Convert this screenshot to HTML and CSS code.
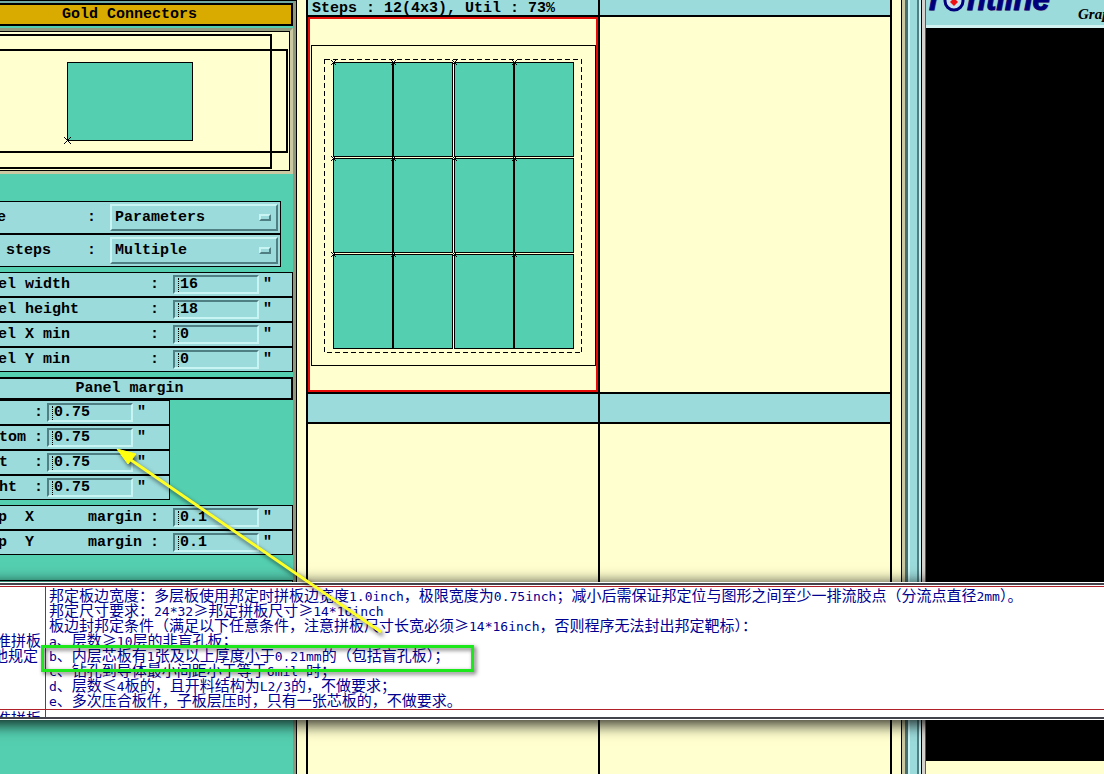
FILE: index.html
```html
<!DOCTYPE html>
<html lang="zh-CN">
<head>
<meta charset="utf-8">
<title>Panel Wizard</title>
<link rel="stylesheet" href="styles.css">
</head>
<body>
<div class="app">
  <aside class="settings">
    <div class="settings-inner">
      <h2 class="title gold">Gold Connectors</h2>
      <div class="preview">
        <svg viewBox="0 0 289 138" shape-rendering="crispEdges" aria-label="Panel preview">
          <g fill="none" stroke="#000" stroke-width="2">
            <path d="M-2 3H271V136H-2"/>
            <path d="M-2 18H287V120H-2"/>
          </g>
          <rect x="67.5" y="30.5" width="125" height="78" fill="#54cfb0" stroke="#000"/>
          <path d="M64 105l7 7M71 105l-7 7" stroke="#000"/>
        </svg>
      </div>

      <div class="group choices">
        <div class="row">
          <label class="name" for="type">e</label><span class="colon">:</span>
          <span class="picker"><select id="type"><option>Parameters</option></select></span>
        </div>
        <div class="row">
          <label class="name" for="steps"> steps</label><span class="colon">:</span>
          <span class="picker"><select id="steps"><option>Multiple</option></select></span>
        </div>
      </div>

      <div class="group">
        <div class="row"><label class="name" for="pw">el width</label><span class="colon">:</span><span class="field"><input id="pw" type="text" value="16"></span><span class="unit">"</span></div>
        <div class="row"><label class="name" for="ph">el height</label><span class="colon">:</span><span class="field"><input id="ph" type="text" value="18"></span><span class="unit">"</span></div>
        <div class="row"><label class="name" for="px">el X min</label><span class="colon">:</span><span class="field"><input id="px" type="text" value="0"></span><span class="unit">"</span></div>
        <div class="row"><label class="name" for="py">el Y min</label><span class="colon">:</span><span class="field"><input id="py" type="text" value="0"></span><span class="unit">"</span></div>
      </div>

      <h2 class="title margin-title">Panel margin</h2>
      <div class="group margins">
        <div class="row"><label class="name" for="mt" aria-label="Top"></label><span class="colon">:</span><span class="field"><input id="mt" type="text" value="0.75"></span><span class="unit">"</span></div>
        <div class="row"><label class="name" for="mb">tom</label><span class="colon">:</span><span class="field"><input id="mb" type="text" value="0.75"></span><span class="unit">"</span></div>
        <div class="row"><label class="name" for="ml">t</label><span class="colon">:</span><span class="field"><input id="ml" type="text" value="0.75"></span><span class="unit">"</span></div>
        <div class="row"><label class="name" for="mr">ht</label><span class="colon">:</span><span class="field"><input id="mr" type="text" value="0.75"></span><span class="unit">"</span></div>
      </div>

      <div class="group step-margins">
        <div class="row"><label class="name" for="sx">p  X      margin</label><span class="colon">:</span><span class="field"><input id="sx" type="text" value="0.1"></span><span class="unit">"</span></div>
        <div class="row"><label class="name" for="sy">p  Y      margin</label><span class="colon">:</span><span class="field"><input id="sy" type="text" value="0.1"></span><span class="unit">"</span></div>
      </div>
      <div class="more"></div>
    </div>
  </aside>

  <main class="results">
    <div class="sheet">
      <div class="caption">Steps : 12(4x3), Util : 73%</div>
      <div class="caption"></div>
      <div class="cell selected">
        <svg class="layout" viewBox="310 19 286 371" shape-rendering="crispEdges" aria-label="Panel layout, 4 by 3 steps">
          <defs>
            <g id="step">
              <rect x=".5" y=".5" width="59" height="94" fill="#54cfb0" stroke="#000"/>
            </g>
            <g id="step-row">
              <use href="#step" x="333"/>
              <use href="#step" x="393"/>
              <use href="#step" x="454"/>
              <use href="#step" x="514"/>
              <path d="M331 -2l5 5M336 -2l-5 5M391 -2l5 5M396 -2l-5 5M452 -2l5 5M457 -2l-5 5M512 -2l5 5M517 -2l-5 5" stroke="#000"/>
            </g>
          </defs>
          <rect x="311.5" y="45.5" width="284" height="320" fill="none" stroke="#000"/>
          <rect x="324.5" y="59.5" width="257" height="293" fill="none" stroke="#000" stroke-dasharray="5 3"/>
          <use href="#step-row" y="62"/>
          <use href="#step-row" y="158"/>
          <use href="#step-row" y="254"/>
        </svg>
      </div>
      <div class="cell"></div>
      <div class="caption"></div>
      <div class="caption"></div>
      <div class="cell"></div>
      <div class="cell"></div>
    </div>
  </main>

  <div class="splitter"></div>

  <section class="viewer">
    <header class="brand">
      <svg class="logo" viewBox="0 0 126 25" width="126" height="25" aria-label="Frontline">
        <g font-family="Liberation Sans, Arial, sans-serif" font-weight="700" font-style="italic" font-size="31">
          <g fill="#99a0a0"><text x="4" y="11">r</text><text x="42" y="11">ntline</text></g>
          <g fill="#00007c" stroke="#00007c"><text x="3" y="10">r</text><text x="41" y="10">ntline</text></g>
        </g>
        <circle cx="28" cy="1" r="9" fill="#c9e4ee" stroke="#00007c" stroke-width="3"/>
        <path d="M28 -2l4 4-4 4-4-4z" fill="#f01010"/>
      </svg>
      <span class="product">Graphics</span>
    </header>
    <div class="screen"></div>
    <div class="console"></div>
  </section>
</div>

<article class="note">
  <div class="note-side"><p>准拼板</p><p class="indent">他规定</p></div>
  <div class="note-text">
    <p>邦定板边宽度：多层板使用邦定时拼板边宽度<span>1.0inch</span>，极限宽度为<span>0.75inch</span>；减小后需保证邦定位与图形之间至少一排流胶点（分流点直径<span>2mm</span>）。</p>
    <p>邦定尺寸要求：<span>24*32</span>≥邦定拼板尺寸≥<span>14*16inch</span></p>
    <p>板边封邦定条件（满足以下任意条件，注意拼板尺寸长宽必须≥<span>14*16inch</span>，否则程序无法封出邦定靶标）：</p>
    <p><span>a</span>、层数≥<span>10</span>层的非盲孔板；</p>
    <p><span>b</span>、内层芯板有<span>1</span>张及以上厚度小于<span>0.21mm</span>的（包括盲孔板）；</p>
    <p><span>c</span>、钻孔到导体最小间距小于等于<span>6mil </span>时；</p>
    <p><span>d</span>、层数≤<span>4</span>板的，且开料结构为<span>L2/3</span>的，不做要求；</p>
    <p><span>e</span>、多次压合板件，子板层压时，只有一张芯板的，不做要求。</p>
  </div>
  <div class="note-side next"><p>准拼板</p></div>
  <div class="note-text next"></div>
</article>
<div class="highlight"></div>
<svg class="arrow" viewBox="0 0 290 210" width="290" height="210" aria-hidden="true">
  <path d="M281 192L28 18" fill="none" stroke="#ffff28" stroke-width="3"/>
  <path d="M17 9L36 14L28 24Z" fill="#ffff10" stroke="#ffff10"/>
</svg>
</body>
</html>
```

FILE: styles.css
```css
:root {
  --teal: #54cfb0;
  --blue: #9cdbdb;
  --cream: #ffffcf;
  --light: #c9f4f4;
  --dark: #507f83;
}

*, *::before, *::after { box-sizing: border-box; }

body {
  margin: 0;
  position: relative;
  overflow: hidden;
  background: var(--cream);
  color: #000;
  font: bold 15px/19px "Liberation Mono", "Courier New", monospace;
}

h2, p { margin: 0; font: inherit; }

.app {
  display: grid;
  grid-template-columns: 297px minmax(0, 1fr) 25px 178px;
  min-height: 100vh;
}

/* Settings column */
.settings {
  overflow: hidden;
  background: var(--teal);
  border-right: 1px solid #000;
  border-top: 1px solid #000;
  box-shadow: inset -3px 0 #91997c, inset 0 2px #71a9a5;
}
.settings-inner {
  margin-left: -4px;
  padding: 2px 3px 0 0;
}
.title {
  height: 23px;
  border: 2px solid #000;
  text-align: center;
}
.gold { background: #d9ab00; padding-right: 30px; }
.margin-title {
  margin-top: 5px;
  background: var(--blue);
  padding-right: 30px;
}
.preview {
  margin-top: 2px;
  padding-left: 4px;
  background: var(--cream);
  border: 3px solid #cbc9a2;
  border-top-color: #91997c;
  border-left: 0;
}
.preview svg {
  display: block;
  border: solid #000;
  border-width: 1px 1px 1px 0;
  box-sizing: content-box;
  width: 289px;
  height: 138px;
}

.row {
  display: flex;
  align-items: center;
  height: 25px;
  padding: 0 20px 0 1px;
  border: 1px solid #000;
  background: var(--blue);
}
.name { flex: 1; white-space: pre; }
.colon { margin-right: 14px; }
.choices { margin: 27px 12px 5px 0; }
.choices .row { height: 33px; padding: 0 2px 0 0; }
.margins { width: 174px; margin-bottom: 5px; }
.margins .row { padding-right: 23px; padding-left: 2px; }
.margins .colon { margin-right: 4px; }

.picker { position: relative; width: 168px; }
.picker::after {
  content: "";
  position: absolute;
  right: 7px;
  top: 10px;
  width: 12px;
  height: 7px;
  border: 2px solid var(--light);
  border-right-color: var(--dark);
  border-bottom-color: var(--dark);
  pointer-events: none;
}
select {
  display: block;
  appearance: none;
  width: 100%;
  height: 27px;
  padding: 0 3px;
  border: 2px solid var(--light);
  border-right-color: var(--dark);
  border-bottom-color: var(--dark);
  border-radius: 0;
  background: var(--blue);
  color: #000;
  font: inherit;
}

.field { position: relative; width: 86px; margin-right: 4px; }
.field::before {
  content: "";
  position: absolute;
  left: 5px;
  top: 3px;
  height: 14px;
  border-left: 1px dotted #000;
}
input {
  display: block;
  width: 100%;
  height: 19px;
  padding: 0 0 0 5px;
  border: 2px solid var(--light);
  border-top-color: var(--dark);
  border-left-color: var(--dark);
  border-radius: 0;
  background: transparent;
  color: #000;
  font: inherit;
}
.more {
  height: 130px;
  margin-top: 25px;
  border: 1px solid #000;
}

/* Candidate layouts */
.results { display: flex; padding: 0 9px; background: var(--cream); }
.sheet {
  flex: 1;
  display: grid;
  grid-template-columns: 1fr 1fr;
  grid-template-rows: 15px auto 28px 1fr;
  gap: 2px;
  padding: 0 2px;
  background: #000;
}
.caption { padding-left: 4px; background: var(--blue); line-height: 17px; }
.cell { background: var(--cream); }
.selected { border: 2px solid #e80c08; }
.layout { display: block; width: 100%; height: auto; }

.splitter {
  background: linear-gradient(to right,
    #000 1px, #cbc9a2 1px 4px, #48706e 4px 7px, #c9f4f4 7px 9px,
    #9cdbdb 9px 16px, #507f83 16px 18px, #c9f4f4 18px 20px,
    #000 20px 21px, #d5d1cd 21px 24px, #5f5757 24px);
}

/* Viewer */
.viewer { display: flex; flex-direction: column; overflow: hidden; background: #000; }
.brand {
  display: flex;
  gap: 26px;
  height: 28px;
  background: var(--blue);
  border-bottom: 3px solid #d2f2f2;
}
.logo { flex: none; }
.product {
  padding-top: 5px;
  font: italic bold 15px/19px "Liberation Serif", "Times New Roman", serif;
}
.screen { flex: 1; }
.console { height: 13px; background: var(--cream); }

/* Overlaid note */
.note {
  position: absolute;
  top: 583px;
  left: -60px;
  right: 0;
  display: grid;
  grid-template-columns: 106px 1fr;
  padding-top: 1px;
  background: #fff;
  border: solid #43434b;
  border-width: 2px 0;
  box-shadow: 0 0 0 1px #fff, 0 3px 14px 3px rgba(0, 0, 0, .8);
  color: #000090;
  font: 15px/15px "Noto Sans CJK SC", sans-serif;
  white-space: nowrap;
}
.note p { height: 15px; }
.note span { font: 13px/15px "DejaVu Sans Mono", monospace; white-space: pre; }
.note-side {
  display: flex;
  flex-direction: column;
  justify-content: center;
  align-items: flex-end;
  padding: 0 4px 2px 0;
  border: solid #b02028;
  border-width: 1px 1px 1px 0;
}
.note-side .indent { padding-right: 3px; }
.note-text {
  padding: 0 0 2px 3px;
  border: solid #b02028;
  border-width: 1px 0;
}
.next {
  height: 7px;
  overflow: hidden;
  justify-content: flex-start;
  border-top: 0;
  border-bottom: 0;
}

.highlight {
  position: absolute;
  left: 41px;
  top: 645px;
  width: 433px;
  height: 27px;
  border: 3px solid #1ce81c;
  filter: drop-shadow(2px 2px 2px rgba(0, 0, 0, .6));
}
.arrow {
  position: absolute;
  left: 100px;
  top: 440px;
  filter: drop-shadow(2px 3px 2px rgba(0, 0, 0, .6));
  pointer-events: none;
}
```
